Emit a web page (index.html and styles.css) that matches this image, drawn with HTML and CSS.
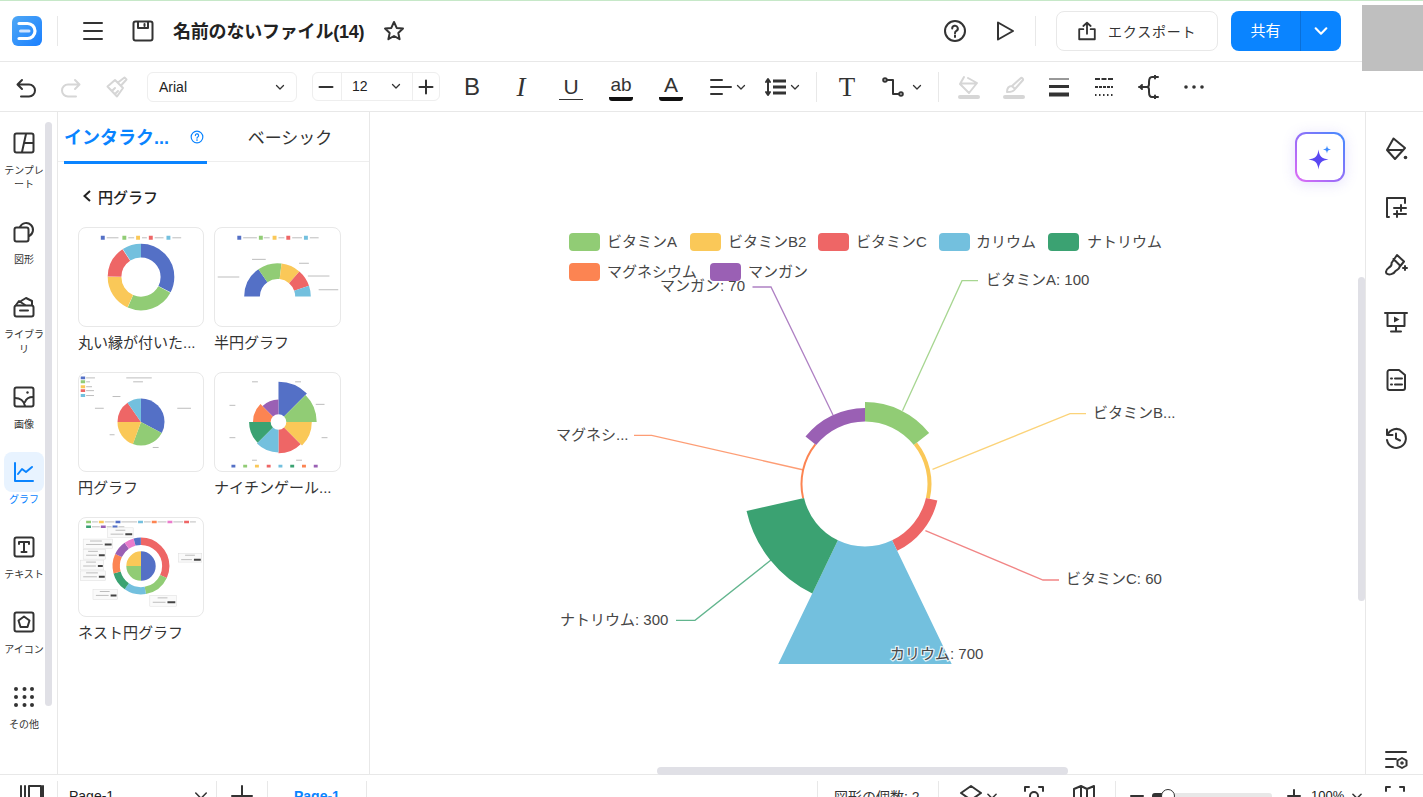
FILE: index.html
```html
<!DOCTYPE html>
<html lang="ja">
<head>
    <meta charset="UTF-8">
    <title>名前のないファイル(14)</title>
    <link rel="stylesheet" href="styles.css">
</head>
<body>
<div class="app">
    <div class="avatar"></div>

    <header class="topbar">
        <div class="logo">
            <svg viewBox="0 0 30 30" width="30" height="30"><path d="M7 7.5h8.5a7.5 7.5 0 0 1 0 15H7" fill="none" stroke="#fff" stroke-width="3.2" stroke-linecap="round"/><path d="M8.500 15h8.500" stroke="#cfe4ff" stroke-width="3" stroke-linecap="round"/></svg>
        </div>
        <span class="vline ml-15"></span>
        <svg class="ico ml-23" viewBox="0 0 24 24"><path d="M3 4h18M3 12h18M3 20h18"/></svg>
        <svg class="ico ml-26" viewBox="0 0 24 24"><rect x="2.500" y="2.500" width="19" height="19" rx="2"/><path d="M7 3v6h10V3M13.500 5v2"/></svg>
        <h1 class="title">名前のないファイル(14)</h1>
        <svg class="ico star" viewBox="0 0 24 24"><path d="M12 3l2.700 5.900 6.300.7-4.700 4.300 1.300 6.300-5.600-3.200-5.600 3.200 1.300-6.300L3 9.600l6.300-.7z"/></svg>

        <div class="topbar-right">
            <svg class="ico" viewBox="0 0 24 24"><circle cx="12" cy="12" r="10"/><path d="M9.200 9.500a2.800 2.800 0 1 1 4.200 2.400c-.9.500-1.400 1-1.400 2.300M12 16.500v1.500"/></svg>
            <svg class="ico ml-27" viewBox="0 0 24 24"><path d="M4 3.500L19 12 4 20.500z"/></svg>
            <span class="vline ml-17"></span>
            <button class="export-btn ml-20">
                <svg class="ico" viewBox="0 0 24 24"><path d="M12 15V3M8 6.500L12 3l4 3.500M8 10H3.500v11h17V10H16"/></svg>
                <span>エクスポート</span>
            </button>
            <div class="share-btn ml-13">
                <span class="share-label">共有</span>
                <span class="share-more"><svg class="chev chev-white" viewBox="0 0 12 12"><path d="M2 4l4 4 4-4"/></svg></span>
            </div>
        </div>
    </header>

    <div class="toolbar">
        <svg class="ico ml-14" viewBox="0 0 24 24"><path d="M8 5L3.500 9.500 8 14M4 9.500h11a6 6 0 0 1 0 12H7"/></svg>
        <svg class="ico off ml-21" viewBox="0 0 24 24"><path d="M16 5l4.500 4.500L16 14M20 9.500H9a6 6 0 0 0 0 12h8"/></svg>
        <svg class="ico off ml-22" viewBox="0 0 24 24"><path d="M2.500 11.500L10 5l8 8-6 8.500zM13 7.500l6.500-5 2 2-5.500 6M7 16l3-3M10 19l3-3"/></svg>
        <div class="font-select ml-18">
            <span>Arial</span>
            <svg class="chev" viewBox="0 0 12 12"><path d="M2.500 4.500L6 8l3.500-3.500"/></svg>
        </div>
        <div class="size-group ml-15">
            <svg class="ico sm" viewBox="0 0 16 16"><path d="M1.500 8h13"/></svg>
            <div class="size-value">
                <span>12</span>
                <svg class="chev" viewBox="0 0 12 12"><path d="M2.500 4.500L6 8l3.500-3.500"/></svg>
            </div>
            <svg class="ico sm" viewBox="0 0 16 16"><path d="M1.500 8h13M8 1.500v13"/></svg>
        </div>
        <span class="glyph bold ml-20">B</span>
        <span class="glyph italic ml-25">I</span>
        <span class="glyph under ml-26">U</span>
        <span class="glyph ab ml-26">ab</span>
        <span class="glyph color ml-26">A</span>
        <div class="combo ml-26">
            <svg class="ico" viewBox="0 0 24 24"><path d="M2 5h11M2 12h20M2 19h11"/></svg>
            <svg class="chev" viewBox="0 0 12 12"><path d="M2.500 4.500L6 8l3.500-3.500"/></svg>
        </div>
        <div class="combo ml-16">
            <svg class="ico" viewBox="0 0 24 24"><path d="M5 5v14M3 7l2-3 2 3M3 17l2 3 2-3"/><path class="thick" d="M10 6h13M10 12h13M10 18h13"/></svg>
            <svg class="chev" viewBox="0 0 12 12"><path d="M2.500 4.500L6 8l3.500-3.500"/></svg>
        </div>
        <span class="vline ml-15"></span>
        <span class="glyph serif-t ml-18">T</span>
        <div class="combo wide ml-22">
            <svg class="ico" viewBox="0 0 24 24"><circle cx="4" cy="5" r="1.800"/><circle cx="20" cy="19" r="1.800"/><path d="M6 5h6v14h6"/></svg>
            <svg class="chev" viewBox="0 0 12 12"><path d="M2.500 4.500L6 8l3.500-3.500"/></svg>
        </div>
        <span class="vline ml-15"></span>
        <svg class="ico off ml-18" viewBox="0 0 24 24"><path d="M7 2L3 9l9 9 8-10-9-5M5 8.500h13"/><path class="bar" d="M3 22h18"/></svg>
        <svg class="ico off ml-21" viewBox="0 0 24 24"><path d="M19 3c1-.5 2.500 1 2 2l-8 9-3-3zM10 11c-3 0-5 2-5 6 3 0 7 0 8-3"/><path class="bar" d="M3 22h18"/></svg>
        <svg class="ico ml-21" viewBox="0 0 24 24"><path class="hair" d="M2 4h20"/><path class="thick" d="M2 11.500h20"/><path class="heavy" d="M2 19.500h20"/></svg>
        <svg class="ico ml-21" viewBox="0 0 24 24"><path class="dash-a" d="M3 4h18"/><path class="dash-b" d="M3 12h18"/><path class="dash-c" d="M3 20h18"/></svg>
        <svg class="ico ml-22" viewBox="0 0 24 24"><path d="M10 12H1M4 10l-2 2 2 2M20 2h-6c-3 0-3 3-3 5v2c0 2-1 3-2 3 1 0 2 1 2 3v2c0 2 0 5 3 5h6"/><path d="M17 .5v3M17 20.500v3" /></svg>
        <svg class="ico dots ml-19" viewBox="0 0 24 24"><circle cx="5" cy="12" r="1.800"/><circle cx="13" cy="12" r="1.800"/><circle cx="21" cy="12" r="1.800"/></svg>
    </div>

    <div class="main">
        <nav class="rail">
            <a class="rail-item">
                <svg class="ico" viewBox="0 0 24 24"><rect x="2.500" y="2.500" width="19" height="19" rx="2"/><path d="M14 3l-4 18M12 12h9"/></svg>
                <span>テンプレート</span>
            </a>
            <a class="rail-item">
                <svg class="ico" viewBox="0 0 24 24"><rect x="2.500" y="7.500" width="14" height="14" rx="2"/><path d="M8 7a6.800 6.800 0 1 1 9 9"/></svg>
                <span>図形</span>
            </a>
            <a class="rail-item">
                <svg class="ico" viewBox="0 0 24 24"><rect x="2.500" y="10.500" width="19" height="11" rx="2"/><path d="M8 15.500h8M4 10l3-4 6 4M9 6l5-3 6 3v4"/></svg>
                <span>ライブラリ</span>
            </a>
            <a class="rail-item">
                <svg class="ico" viewBox="0 0 24 24"><rect x="2.500" y="2.500" width="19" height="19" rx="2"/><path d="M3 13c5 0 9 3 10 8M13 17c1-3 4-5 8-5"/><circle class="solid" cx="15.500" cy="7.500" r="1.200"/></svg>
                <span>画像</span>
            </a>
            <a class="rail-item active">
                <svg class="ico" viewBox="0 0 24 24"><path d="M3 3v18h18M6 14l4-5 4 3 6-5"/></svg>
                <span>グラフ</span>
            </a>
            <a class="rail-item">
                <svg class="ico" viewBox="0 0 24 24"><rect x="2.500" y="2.500" width="19" height="19" rx="2"/><path d="M7 9V7h10v2M12 7v10M9.500 17h5"/></svg>
                <span>テキスト</span>
            </a>
            <a class="rail-item">
                <svg class="ico" viewBox="0 0 24 24"><rect x="2.500" y="2.500" width="19" height="19" rx="2"/><path d="M12 6.500l5.500 4-2 6.500h-7l-2-6.500z"/></svg>
                <span>アイコン</span>
            </a>
            <a class="rail-item">
                <svg class="ico solid-all" viewBox="0 0 24 24"><circle cx="4" cy="4" r="2"/><circle cx="12.500" cy="4" r="2"/><circle cx="20" cy="4" r="2"/><circle cx="4" cy="12" r="2"/><circle cx="12.500" cy="12" r="2"/><circle cx="20" cy="12" r="2"/><circle cx="4" cy="20" r="2"/><circle cx="12.500" cy="20" r="2"/><circle cx="20" cy="20" r="2"/></svg>
                <span>その他</span>
            </a>
            <div class="rail-thumb"></div>
        </nav>

        <aside class="panel">
            <div class="tabs">
                <div class="tab active">
                    <span>インタラク...</span>
                    <svg class="ico tab-help" viewBox="0 0 24 24"><circle cx="12" cy="12" r="10"/><path d="M9.200 9.500a2.800 2.800 0 1 1 4.200 2.400c-.9.500-1.400 1-1.400 2.300M12 16.500v1.500"/></svg>
                </div>
                <div class="tab">ベーシック</div>
            </div>
            <div class="back-row">
                <svg class="back-chev" viewBox="0 0 10 14"><path d="M8 2L2.500 7 8 12"/></svg>
                <span>円グラフ</span>
            </div>
            <div class="thumb-grid">
                <div class="thumb">
                    <div class="thumb-card">
                        <svg viewBox="0 0 126 100">
                            <g class="legend-bars"><path d="M28 10h12M50 10h6M64 10h5M77 10h9M95 10h9"/></g>
                            <g fill="none" stroke-width="14">
                                <circle cx="63" cy="50" r="27" pathLength="360" stroke="#5470c6" stroke-dasharray="117 360" transform="rotate(-90 63 50)"/>
                                <circle cx="63" cy="50" r="27" pathLength="360" stroke="#91cc75" stroke-dasharray="85 360" transform="rotate(28 63 50)"/>
                                <circle cx="63" cy="50" r="27" pathLength="360" stroke="#fac858" stroke-dasharray="66 360" transform="rotate(114 63 50)"/>
                                <circle cx="63" cy="50" r="27" pathLength="360" stroke="#ee6666" stroke-dasharray="55 360" transform="rotate(181 63 50)"/>
                                <circle cx="63" cy="50" r="27" pathLength="360" stroke="#73c0de" stroke-dasharray="33 360" transform="rotate(237 63 50)"/>
                            </g>
                            <path d="M22 8h4v4h-4z" fill="#5470c6"/><path d="M44 8h4v4h-4z" fill="#91cc75"/><path d="M58 8h4v4h-4z" fill="#fac858"/><path d="M71 8h4v4h-4z" fill="#ee6666"/><path d="M89 8h4v4h-4z" fill="#73c0de"/>
                        </svg>
                    </div>
                    <p>丸い縁が付いた...</p>
                </div>
                <div class="thumb">
                    <div class="thumb-card">
                        <svg viewBox="0 0 126 100">
                            <g class="legend-bars"><path d="M28 10h14M49 10h6M64 10h6M78 10h10M96 10h9M37 32h14M2 50h22M85 36h10M94 49h22M105 63h20"/></g>
                            <g fill="none" stroke-width="16">
                                <circle cx="63" cy="70" r="26" pathLength="360" stroke="#5470c6" stroke-dasharray="55 360" transform="rotate(180 63 70)"/>
                                <circle cx="63" cy="70" r="26" pathLength="360" stroke="#91cc75" stroke-dasharray="42 360" transform="rotate(235 63 70)"/>
                                <circle cx="63" cy="70" r="26" pathLength="360" stroke="#fac858" stroke-dasharray="34 360" transform="rotate(277 63 70)"/>
                                <circle cx="63" cy="70" r="26" pathLength="360" stroke="#ee6666" stroke-dasharray="30 360" transform="rotate(311 63 70)"/>
                                <circle cx="63" cy="70" r="26" pathLength="360" stroke="#73c0de" stroke-dasharray="19 360" transform="rotate(341 63 70)"/>
                            </g>
                            <path d="M22 8h4v4h-4z" fill="#5470c6"/><path d="M44 8h4v4h-4z" fill="#91cc75"/><path d="M58 8h4v4h-4z" fill="#fac858"/><path d="M72 8h4v4h-4z" fill="#ee6666"/><path d="M90 8h4v4h-4z" fill="#73c0de"/>
                        </svg>
                    </div>
                    <p>半円グラフ</p>
                </div>
                <div class="thumb">
                    <div class="thumb-card">
                        <svg viewBox="0 0 126 100">
                            <g class="legend-bars"><path d="M7 5h9M7 9h4M7 14h6M7 18h8M7 23h8M48 5h26M55 9h10M34 24h8M16 36h9M100 36h14M31 63h5M75 76h6"/></g>
                            <g fill="none" stroke-width="24">
                                <circle cx="63" cy="50" r="12" pathLength="360" stroke="#5470c6" stroke-dasharray="118 360" transform="rotate(-90 63 50)"/>
                                <circle cx="63" cy="50" r="12" pathLength="360" stroke="#91cc75" stroke-dasharray="82 360" transform="rotate(28 63 50)"/>
                                <circle cx="63" cy="50" r="12" pathLength="360" stroke="#fac858" stroke-dasharray="70 360" transform="rotate(110 63 50)"/>
                                <circle cx="63" cy="50" r="12" pathLength="360" stroke="#ee6666" stroke-dasharray="55 360" transform="rotate(180 63 50)"/>
                                <circle cx="63" cy="50" r="12" pathLength="360" stroke="#73c0de" stroke-dasharray="35 360" transform="rotate(235 63 50)"/>
                            </g>
                            <path d="M1.500 3.500h4.500v3H1.500z" fill="#5470c6"/><path d="M1.500 7.500h4.500v3H1.500z" fill="#91cc75"/><path d="M1.500 12.500h4.500v3H1.500z" fill="#fac858"/><path d="M1.500 16.500h4.500v3H1.500z" fill="#ee6666"/><path d="M1.500 21.500h4.500v3H1.500z" fill="#73c0de"/>
                        </svg>
                    </div>
                    <p>円グラフ</p>
                </div>
                <div class="thumb">
                    <div class="thumb-card">
                        <svg viewBox="0 0 126 100">
                            <g class="legend-bars"><path d="M81 9h6M102 32h9M108 66h6M82 89h6M37 89h5M14 66h6M14 33h6M37 9h6"/></g>
                            <g fill="none">
                                <circle cx="64" cy="50" r="24.500" stroke-width="33" pathLength="360" stroke="#5470c6" stroke-dasharray="45 360" transform="rotate(-90 64 50)"/>
                                <circle cx="64" cy="50" r="23.500" stroke-width="31" pathLength="360" stroke="#91cc75" stroke-dasharray="45 360" transform="rotate(-45 64 50)"/>
                                <circle cx="64" cy="50" r="21" stroke-width="26" pathLength="360" stroke="#fac858" stroke-dasharray="45 360" transform="rotate(0 64 50)"/>
                                <circle cx="64" cy="50" r="20" stroke-width="24" pathLength="360" stroke="#ee6666" stroke-dasharray="45 360" transform="rotate(45 64 50)"/>
                                <circle cx="64" cy="50" r="19.500" stroke-width="23" pathLength="360" stroke="#73c0de" stroke-dasharray="45 360" transform="rotate(90 64 50)"/>
                                <circle cx="64" cy="50" r="19" stroke-width="22" pathLength="360" stroke="#3ba272" stroke-dasharray="45 360" transform="rotate(135 64 50)"/>
                                <circle cx="64" cy="50" r="17" stroke-width="18" pathLength="360" stroke="#fc8452" stroke-dasharray="45 360" transform="rotate(180 64 50)"/>
                                <circle cx="64" cy="50" r="15.500" stroke-width="15" pathLength="360" stroke="#9a60b4" stroke-dasharray="45 360" transform="rotate(225 64 50)"/>
                            </g>
                            <g class="legend-row" stroke-width="3"><path d="M16 95h4" stroke="#5470c6"/><path d="M28 95h4" stroke="#91cc75"/><path d="M40 95h4" stroke="#fac858"/><path d="M52 95h4" stroke="#ee6666"/><path d="M64 95h4" stroke="#73c0de"/><path d="M76 95h4" stroke="#3ba272"/><path d="M88 95h4" stroke="#fc8452"/><path d="M100 95h4" stroke="#9a60b4"/></g>
                        </svg>
                    </div>
                    <p>ナイチンゲール...</p>
                </div>
                <div class="thumb">
                    <div class="thumb-card">
                        <svg viewBox="0 0 126 100">
                            <g class="legend-row" stroke-width="2.500"><path d="M7 4h5" stroke="#91cc75"/><path d="M20 4h5" stroke="#fac858"/><path d="M37 4h5" stroke="#5470c6"/><path d="M60 4h5" stroke="#73c0de"/><path d="M74 4h5" stroke="#fc8452"/><path d="M90 4h5" stroke="#ea7ccc"/><path d="M107 4h5" stroke="#ee6666"/><path d="M7 9h5" stroke="#3ba272"/><path d="M22 9h5" stroke="#9a60b4"/><path d="M34 9h5" stroke="#5470c6"/></g>
                            <g class="legend-bars"><path d="M13 4h6M26 4h10M43 4h16M66 4h7M80 4h9M96 4h10M113 4h6M13 9h8M28 9h5M40 9h6"/></g>
                            <g fill="none" stroke-width="7.500">
                                <circle cx="63" cy="49" r="25.300" pathLength="360" stroke="#ee6666" stroke-dasharray="115 360" transform="rotate(-90 63 49)"/>
                                <circle cx="63" cy="49" r="25.300" pathLength="360" stroke="#91cc75" stroke-dasharray="55 360" transform="rotate(25 63 49)"/>
                                <circle cx="63" cy="49" r="25.300" pathLength="360" stroke="#73c0de" stroke-dasharray="45 360" transform="rotate(80 63 49)"/>
                                <circle cx="63" cy="49" r="25.300" pathLength="360" stroke="#3ba272" stroke-dasharray="40 360" transform="rotate(125 63 49)"/>
                                <circle cx="63" cy="49" r="25.300" pathLength="360" stroke="#fc8452" stroke-dasharray="40 360" transform="rotate(165 63 49)"/>
                                <circle cx="63" cy="49" r="25.300" pathLength="360" stroke="#9a60b4" stroke-dasharray="30 360" transform="rotate(205 63 49)"/>
                                <circle cx="63" cy="49" r="25.300" pathLength="360" stroke="#ea7ccc" stroke-dasharray="20 360" transform="rotate(235 63 49)"/>
                                <circle cx="63" cy="49" r="25.300" pathLength="360" stroke="#5470c6" stroke-dasharray="15 360" transform="rotate(255 63 49)"/>
                            </g>
                            <g fill="none" stroke-width="15">
                                <circle cx="63" cy="49" r="7.500" pathLength="360" stroke="#5470c6" stroke-dasharray="180 360" transform="rotate(-90 63 49)"/>
                                <circle cx="63" cy="49" r="7.500" pathLength="360" stroke="#91cc75" stroke-dasharray="90 360" transform="rotate(90 63 49)"/>
                                <circle cx="63" cy="49" r="7.500" pathLength="360" stroke="#fac858" stroke-dasharray="90 360" transform="rotate(180 63 49)"/>
                            </g>
                            <g class="mini-box">
                                <rect x="29" y="10" width="26" height="10"/><rect x="4" y="21.500" width="30" height="9.500"/><rect x="4" y="32" width="23" height="10"/><rect x="1" y="43" width="24" height="10"/><rect x="1" y="54" width="26" height="10"/><rect x="14" y="73" width="25" height="10"/><rect x="72" y="79" width="27" height="11"/><rect x="101" y="36" width="24" height="9"/>
                            </g>
                            <g class="legend-bars"><path d="M32 16.500h13M7 27h17M7 38h11M4 49h13M4 60h14M17 79h13M75 86h13M104 42.500h11M37 12.500h10M11 23.500h12M9 34h10M7 45h10M7 56h12M21 75h10M80 81.500h10M108 38h10"/></g>
                            <g class="mini-tag"><path d="M47 16.500h7M26 27h7M20 38h6M19 49h5M20 60h6M32 79h6M90 86h8M117 42.500h7"/></g>
                        </svg>
                    </div>
                    <p>ネスト円グラフ</p>
                </div>
            </div>
        </aside>

        <section class="canvas">
            <svg class="chart" viewBox="540 220 650 444" width="650" height="444">
                <g class="legend">
                    <rect x="569" y="233" width="31" height="18" rx="4" fill="#91cc75"/><text x="607" y="247">ビタミンA</text>
                    <rect x="690" y="233" width="31" height="18" rx="4" fill="#fac858"/><text x="728" y="247">ビタミンB2</text>
                    <rect x="818" y="233" width="31" height="18" rx="4" fill="#ee6666"/><text x="856" y="247">ビタミンC</text>
                    <rect x="939" y="233" width="31" height="18" rx="4" fill="#73c0de"/><text x="976" y="247">カリウム</text>
                    <rect x="1048" y="233" width="31" height="18" rx="4" fill="#3ba272"/><text x="1087" y="247">ナトリウム</text>
                    <rect x="569" y="263" width="31" height="18" rx="4" fill="#fc8452"/><text x="607" y="277">マグネシウム</text>
                    <rect x="710" y="263" width="31" height="18" rx="4" fill="#9a60b4"/><text x="748" y="277">マンガン</text>
                </g>
                <g class="leaders" fill="none">
                    <path d="M902.500 410.700L962 280.700H978" stroke="#91cc75"/>
                    <path d="M932.500 469.300L1070 413.700H1086" stroke="#fac858"/>
                    <path d="M925.400 530.700L1043 580H1059" stroke="#ee6666"/>
                    <path d="M771 560L695 620.300H676" stroke="#3ba272"/>
                    <path d="M803.700 470L651.700 435.300H634" stroke="#fc8452"/>
                    <path d="M833 415L771 287H752.500" stroke="#9a60b4"/>
                </g>
                <g class="sectors" fill="none">
                    <circle cx="865" cy="484" r="72.250" stroke-width="19.500" pathLength="360" stroke="#91cc75" stroke-dasharray="51.430 360" transform="rotate(-90 865 484)"/>
                    <circle cx="865" cy="484" r="64.500" stroke-width="4" pathLength="360" stroke="#fac858" stroke-dasharray="51.430 360" transform="rotate(-38.570 865 484)"/>
                    <circle cx="865" cy="484" r="68.350" stroke-width="11.700" pathLength="360" stroke="#ee6666" stroke-dasharray="51.430 360" transform="rotate(12.860 865 484)"/>
                    <circle cx="865" cy="484" r="135" stroke-width="145" pathLength="360" stroke="#73c0de" stroke-dasharray="51.430 360" transform="rotate(64.290 865 484)"/>
                    <circle cx="865" cy="484" r="92" stroke-width="59" pathLength="360" stroke="#3ba272" stroke-dasharray="51.430 360" transform="rotate(115.710 865 484)"/>
                    <circle cx="865" cy="484" r="63.500" stroke-width="2" pathLength="360" stroke="#fc8452" stroke-dasharray="51.430 360" transform="rotate(167.140 865 484)"/>
                    <circle cx="865" cy="484" r="69.300" stroke-width="13.600" pathLength="360" stroke="#9a60b4" stroke-dasharray="51.430 360" transform="rotate(218.570 865 484)"/>
                </g>
                <g class="labels">
                    <text x="986" y="285">ビタミンA: 100</text>
                    <text x="1093" y="418">ビタミンB...</text>
                    <text x="1066" y="584">ビタミンC: 60</text>
                    <text x="560" y="625">ナトリウム: 300</text>
                    <text x="556" y="440">マグネシ...</text>
                    <text x="660" y="291">マンガン: 70</text>
                    <text class="halo" x="890" y="659">カリウム: 700</text>
                </g>
            </svg>
            <button class="ai-btn">
                <svg viewBox="0 0 46 46" width="46" height="46"><path d="M21.500 15.500c1 7 3 9 10 10-7 1-9 3-10 10-1-7-3-9-10-10 7-1 9-3 10-10z" fill="#5a48f2"/><path d="M30 11.500c.4 2.800 1.200 3.600 4 4-2.800.4-3.600 1.200-4 4-.4-2.800-1.200-3.600-4-4 2.800-.4 3.600-1.200 4-4z" fill="#3f8cff"/></svg>
            </button>
            <div class="scroll-v"></div>
            <div class="scroll-h"></div>
        </section>

        <aside class="side">
            <svg class="ico" viewBox="0 0 24 24"><path d="M9.500 1.500L3 13l8 9 10-11zM4 13h14"/><circle class="solid" cx="21.500" cy="20.500" r="1.800"/></svg>
            <svg class="ico" viewBox="0 0 24 24"><path d="M5 22H3V3h18v5M10 13h12M10 19h12M17 10v6M13 16v6"/></svg>
            <svg class="ico" viewBox="0 0 24 24"><path d="M13 2l7 6.500-4.500 5.500c-.5 3-2.500 2.500-4 4-1.500 3-6.500 4.500-9 2.500-1.500-2.500.5-4.500 2.500-6 2-1 3-2 2.500-4.500zM9.500 6l6 6M21 13v4M19 15h4"/></svg>
            <svg class="ico" viewBox="0 0 24 24"><path d="M1 3h22M3.500 3v13h17V3M12 16v5M7 21.500h10"/><path class="solid" d="M10 6.500l5.500 3-5.500 3z"/></svg>
            <svg class="ico" viewBox="0 0 24 24"><path d="M3.500 4a2 2 0 0 1 2-2H15l6 5v13a2 2 0 0 1-2 2H5.500a2 2 0 0 1-2-2zM11 10.500h7M11 16.500h7M7 10.500h1M7 16.500h1"/></svg>
            <svg class="ico" viewBox="0 0 24 24"><path d="M3 3.500V9h5.500M3.500 9A9.500 9.500 0 1 1 3 14M12 7.500v5l4 2"/></svg>
            <svg class="ico side-last" viewBox="0 0 24 24"><path d="M2 4h20M2 11h10M2 19h7"/><path d="M18 10l4.500 2.500v5L18 20l-4.500-2.500v-5z"/><circle cx="18" cy="15" r=".8"/></svg>
        </aside>
    </div>

    <footer class="bottombar">
        <svg class="ico ml-20" viewBox="0 0 24 24"><path d="M1 2v20M5 2v20M9 2h12v20H9zM23 2v20"/></svg>
        <span class="vline ml-13"></span>
        <div class="page-select ml-11">
            <span>Page-1</span>
            <svg class="chev" viewBox="0 0 12 12"><path d="M1.500 3.500L6 8l4.500-4.500"/></svg>
        </div>
        <span class="vline ml-8"></span>
        <svg class="ico ml-13" viewBox="0 0 24 24"><path d="M2 12h20M12 2v20"/></svg>
        <span class="vline ml-13"></span>
        <span class="page-tab">Page-1</span>
        <span class="vline"></span>
        <span class="vline shape-div"></span>
        <span class="shape-count ml-16">図形の個数: 2</span>
        <span class="vline ml-14"></span>
        <svg class="ico ml-20" viewBox="0 0 24 24"><path d="M12 2l10 7-10 7L2 9zM3 15l9 7 9-7"/></svg>
        <svg class="chev ml-2" viewBox="0 0 12 12"><path d="M2.500 4.500L6 8l3.500-3.500"/></svg>
        <svg class="ico ml-23" viewBox="0 0 24 24"><path d="M3 7V3h4M17 3h4v4M3 17v4h4M17 21h4v-4"/><circle cx="12" cy="12" r="4"/></svg>
        <svg class="ico ml-26" viewBox="0 0 24 24"><path d="M2 5l7-3 6 3 7-3v17l-7 3-6-3-7 3zM9 2v17M15 5v17"/></svg>
        <span class="vline ml-19"></span>
        <svg class="ico sm ml-13" viewBox="0 0 16 16"><path d="M2 8h12"/></svg>
        <div class="slider ml-7"><span class="slider-fill"></span><span class="slider-thumb"></span></div>
        <svg class="ico sm ml-14" viewBox="0 0 16 16"><path d="M2 8h12M8 2v12"/></svg>
        <span class="zoom-val ml-9">100%</span>
        <svg class="chev ml-4" viewBox="0 0 12 12"><path d="M2.500 4.500L6 8l3.500-3.500"/></svg>
        <svg class="ico ml-19" viewBox="0 0 24 24"><path d="M3 7V3h4M17 3h4v4M3 17v4h4M17 21h4v-4"/></svg>
    </footer>
</div>
</body>
</html>
```

FILE: styles.css
```css
* {
    box-sizing: border-box;
}
html, body {
    margin: 0;
    height: 797px;
    overflow: hidden;
    background-color: #fff;
}
body {
    font-family: "Liberation Sans", "Noto Sans CJK JP", sans-serif;
    color: #222;
}
.app {
    position: relative;
    width: 1423px;
    height: 797px;
    overflow: hidden;
}
.avatar {
    position: absolute;
    top: 5px;
    left: 1362px;
    width: 61px;
    height: 66px;
    background-color: #bfbfbf;
    z-index: 5;
}

.ml-2 { margin-left: 2px; }
.ml-4 { margin-left: 4px; }
.ml-7 { margin-left: 7px; }
.ml-8 { margin-left: 8px; }
.ml-9 { margin-left: 9px; }
.ml-11 { margin-left: 11px; }
.ml-13 { margin-left: 13px; }
.ml-14 { margin-left: 14px; }
.ml-15 { margin-left: 15px; }
.ml-16 { margin-left: 16px; }
.ml-17 { margin-left: 17px; }
.ml-18 { margin-left: 18px; }
.ml-19 { margin-left: 19px; }
.ml-20 { margin-left: 20px; }
.ml-21 { margin-left: 21px; }
.ml-22 { margin-left: 22px; }
.ml-23 { margin-left: 23px; }
.ml-25 { margin-left: 25px; }
.ml-26 { margin-left: 26px; }
.ml-27 { margin-left: 27px; }

.ico {
    flex: none;
    width: 24px;
    height: 24px;
    fill: none;
    stroke: #333;
    stroke-width: 2;
    stroke-linejoin: round;
    stroke-linecap: round;
}
.ico.sm {
    width: 16px;
    height: 16px;
}
.ico.off {
    stroke: #d6d6d6;
}
.ico .solid {
    fill: #333;
    stroke: none;
}
.ico .thick {
    stroke-width: 3;
    stroke-linecap: butt;
}
.ico .hair {
    stroke-width: 1;
    stroke-linecap: butt;
}
.ico .heavy {
    stroke-width: 4;
    stroke-linecap: butt;
}
.ico .bar {
    stroke-width: 4;
}
.ico .dash-a {
    stroke-dasharray: 5 1.500;
    stroke-linecap: butt;
}
.ico .dash-b {
    stroke-dasharray: 3 1;
    stroke-linecap: butt;
}
.ico .dash-c {
    stroke-dasharray: 1.500 2.500;
    stroke-linecap: butt;
}
.ico.dots circle,
.ico.solid-all circle {
    fill: #333;
    stroke: none;
}
.chev {
    flex: none;
    width: 12px;
    height: 12px;
    fill: none;
    stroke: #333;
    stroke-width: 1.300;
    stroke-linecap: round;
    stroke-linejoin: round;
}
.chev-white {
    width: 16px;
    height: 16px;
    stroke: #fff;
    stroke-width: 1.600;
}
.vline {
    flex: none;
    width: 1px;
    height: 30px;
    background-color: #e8e8e8;
}

/* top bar */
.topbar {
    display: flex;
    align-items: center;
    height: 62px;
    padding: 0 82px 0 12px;
    border-top: 1px solid #c6e8c8;
    border-bottom: 1px solid #e8e8e8;
}
.logo {
    flex: none;
    width: 30px;
    height: 30px;
    border-radius: 6px;
    background: linear-gradient(135deg, #4fa8f5, #1a7fff);
}
.logo svg {
    display: block;
}
.title {
    margin: 2px 0 0 18px;
    font-size: 18px;
    font-weight: 700;
    line-height: 26px;
    letter-spacing: -.2px;
    white-space: nowrap;
}
.star {
    margin-left: 18px;
}
.topbar-right {
    display: flex;
    align-items: center;
    margin-left: auto;
}
.export-btn {
    display: flex;
    align-items: center;
    width: 162px;
    height: 40px;
    padding: 0 0 0 19px;
    border: 1px solid #e8e8e8;
    border-radius: 8px;
    background-color: #fff;
    font: inherit;
    font-size: 14px;
    letter-spacing: .8px;
    color: #333;
}
.export-btn .ico {
    width: 22px;
    height: 22px;
    margin-right: 10px;
}
.share-btn {
    display: flex;
    width: 110px;
    height: 40px;
    border-radius: 8px;
    background-color: #0a84ff;
    color: #fff;
    font-size: 15px;
    line-height: 40px;
}
.share-label {
    width: 70px;
    text-align: center;
    border-right: 1px solid #0a6fd8;
}
.share-more {
    flex: 1;
    display: flex;
    align-items: center;
    justify-content: center;
}

/* format bar */
.toolbar {
    display: flex;
    align-items: center;
    height: 50px;
    border-bottom: 1px solid #e8e8e8;
}
.font-select {
    display: flex;
    align-items: center;
    justify-content: space-between;
    width: 150px;
    height: 30px;
    padding: 0 10px 0 11px;
    border: 1px solid #eee;
    border-radius: 6px;
    font-size: 14px;
}
.size-group {
    display: flex;
    align-items: center;
    width: 128px;
    height: 29px;
    padding-left: 5px;
    border: 1px solid #eee;
    border-radius: 6px;
}
.size-value {
    display: flex;
    align-items: center;
    justify-content: space-between;
    width: 72px;
    height: 29px;
    margin: 0 5px 0 7px;
    padding: 0 10px 0 10px;
    border-left: 1px solid #eee;
    border-right: 1px solid #eee;
    border-bottom: 1px solid #eee;
    font-size: 14px;
}
.glyph {
    flex: none;
    width: 24px;
    height: 30px;
    text-align: center;
    font-size: 24px;
    line-height: 30px;
    color: #333;
}
.glyph.italic {
    font-family: "Liberation Serif", serif;
    font-style: italic;
    font-size: 27px;
}
.glyph.serif-t {
    font-family: "Liberation Serif", serif;
    font-size: 27px;
}
.glyph.under {
    font-size: 21px;
    line-height: 26px;
    height: 26px;
    border-bottom: 1.500px solid #333;
    margin-top: 0;
}
.glyph.ab {
    font-size: 19px;
    line-height: 24px;
    height: 28px;
    border-bottom: 4px solid #111;
    border-radius: 3px;
}
.glyph.color {
    font-size: 21px;
    line-height: 24px;
    height: 28px;
    border-bottom: 4px solid #111;
    border-radius: 3px;
}
.combo {
    flex: none;
    display: flex;
    align-items: center;
    width: 38px;
}
.combo .ico {
    width: 24px;
    height: 24px;
}
.combo .chev {
    margin-left: 2px;
}
.combo.wide {
    width: 42px;
}
.combo.wide .chev {
    margin-left: 6px;
}

/* middle area */
.main {
    display: flex;
    height: 662px;
}
.rail {
    position: relative;
    flex: none;
    width: 58px;
    padding-top: 18.500px;
    border-right: 1px solid #e8e8e8;
}
.rail-item {
    position: relative;
    display: flex;
    flex-direction: column;
    align-items: center;
    width: 48px;
    margin-bottom: 27.500px;
    z-index: 0;
}
.rail-item span {
    margin-top: 9px;
    font-size: 10px;
    line-height: 14.500px;
    text-align: center;
    color: #333;
}
.rail-item.active::before {
    content: "";
    position: absolute;
    top: -8px;
    left: 4px;
    width: 40px;
    height: 40px;
    border-radius: 8px;
    background-color: #e8f3ff;
    z-index: -1;
}
.rail-item.active .ico {
    stroke: #0a84ff;
}
.rail-item.active span {
    color: #0a84ff;
}
.rail-thumb {
    position: absolute;
    top: 10px;
    left: 45px;
    width: 7px;
    height: 584px;
    border-radius: 4px;
    background-color: #e0e0e6;
}

.panel {
    flex: none;
    width: 312px;
    border-right: 1px solid #e8e8e8;
}
.tabs {
    display: flex;
    height: 50px;
    border-bottom: 1px solid #eee;
    margin-left: 0;
}
.tab {
    flex: 1;
    height: 52px;
    padding-left: 4px;
    text-align: center;
    font-size: 17px;
    line-height: 54px;
    color: #333;
}
.tab.active {
    flex: none;
    display: flex;
    align-items: center;
    width: 143px;
    margin-left: 6px;
    padding-left: 0;
    height: 52px;
    border-bottom: 3px solid #0a84ff;
    color: #0a84ff;
    font-size: 18px;
    font-weight: 700;
}
.tab.active span {
    margin-top: 3px;
    line-height: 26px;
}
.tab-help {
    width: 14px;
    height: 14px;
    margin-left: 21px;
    stroke: #0a84ff;
}
.back-row {
    display: flex;
    align-items: center;
    height: 24px;
    margin: 22px 0 19px 24px;
    font-size: 15px;
    font-weight: 500;
}
.back-chev {
    width: 10px;
    height: 14px;
    margin-right: 6px;
    fill: none;
    stroke: #222;
    stroke-width: 2;
}
.thumb-grid {
    display: grid;
    grid-template-columns: 126px 127px;
    column-gap: 10px;
    row-gap: 19px;
    padding-left: 20px;
}
.thumb-card {
    height: 100px;
    border: 1px solid #e8e8e8;
    border-radius: 8px;
    overflow: hidden;
}
.thumb-card svg {
    display: block;
    width: 100%;
    height: 100%;
}
.thumb p {
    margin: 6px 0 0;
    font-size: 15px;
    line-height: 20px;
    white-space: nowrap;
    color: #333;
}
.legend-bars {
    fill: none;
    stroke: #bbb;
    stroke-width: 1;
}
.legend-row {
    fill: none;
}
.mini-box rect {
    fill: #fafafa;
    stroke: #ddd;
    stroke-width: .5;
}
.mini-tag {
    fill: none;
    stroke: #444;
    stroke-width: 2;
}

.canvas {
    position: relative;
    flex: 1;
    border-right: 1px solid #e8e8e8;
}
.chart {
    position: absolute;
    top: 108px;
    left: 170px;
    font-size: 15px;
}
.chart text {
    fill: #464646;
}
.leaders path {
    stroke-width: 1.300;
    stroke-opacity: .8;
}
.labels .halo {
    paint-order: stroke;
    stroke: rgba(255, 255, 255, .8);
    stroke-width: 2.500px;
}
.ai-btn {
    position: absolute;
    top: 20px;
    left: 925px;
    width: 50px;
    height: 50px;
    padding: 0;
    border: 2px solid transparent;
    border-radius: 11px;
    background: linear-gradient(#fff, #fff) padding-box,
        linear-gradient(45deg, #e26cf5, #9a6cf8 45%, #3f8cff) border-box;
    box-shadow: 0 2px 14px rgba(110, 90, 240, .18);
}
.ai-btn svg {
    display: block;
}
.scroll-v {
    position: absolute;
    top: 165px;
    right: 0;
    width: 7px;
    height: 324px;
    border-radius: 4px;
    background-color: #e0e0e6;
}
.scroll-h {
    position: absolute;
    bottom: -1px;
    left: 287px;
    width: 411px;
    height: 8px;
    border-radius: 4px;
    background-color: #e0e0e6;
}
.side {
    flex: none;
    display: flex;
    flex-direction: column;
    gap: 33.800px;
    width: 57px;
    padding: 25px 0 2px 18px;
}
.side-last {
    margin-top: auto;
}

/* bottom bar */
.bottombar {
    display: flex;
    align-items: center;
    height: 42px;
    border-top: 1px solid #e8e8e8;
    font-size: 14px;
    white-space: nowrap;
}
.page-select {
    display: flex;
    align-items: center;
    justify-content: space-between;
    width: 139px;
}
.page-select .chev {
    width: 16px;
    height: 16px;
}
.page-tab {
    width: 98px;
    padding-left: 26px;
    color: #0a84ff;
    font-weight: 700;
}
.shape-div {
    margin-left: 450px;
}
.shape-count {
    width: 90px;
    font-size: 14px;
    color: #333;
}
.slider {
    position: relative;
    flex: none;
    width: 120px;
    height: 6px;
    border-radius: 3px;
    background-color: #e8e8e8;
}
.slider-fill {
    position: absolute;
    top: 0;
    left: 0;
    width: 16px;
    height: 6px;
    border-radius: 3px;
    background-color: #333;
}
.slider-thumb {
    position: absolute;
    top: -4px;
    left: 9px;
    width: 14px;
    height: 14px;
    border-radius: 50%;
    border: 1.500px solid #333;
    background-color: #fff;
}
.zoom-val {
    flex: none;
    width: 35px;
    font-size: 13px;
}
.bottombar .chev {
    width: 14px;
    height: 14px;
}
```
